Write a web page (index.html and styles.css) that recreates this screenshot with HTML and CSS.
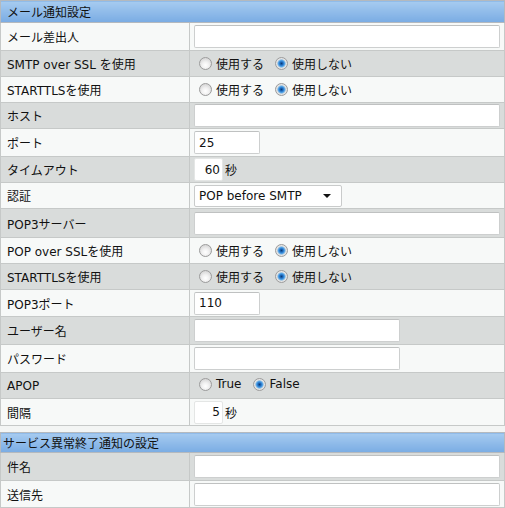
FILE: index.html
```html
<!DOCTYPE html>
<html lang="ja">
<head>
<meta charset="utf-8">
<title>メール通知設定</title>
<link rel="stylesheet" href="styles.css">
</head>
<body>
<div class="page">
  <table class="settings">
    <colgroup><col class="col-label"><col class="col-field"></colgroup>
    <tr class="head"><th colspan="2">メール通知設定</th></tr>
    <tr class="light tall"><td class="label">メール差出人</td><td class="field"><input class="text full" type="text"></td></tr>
    <tr class="gray"><td class="label">SMTP over SSL を使用</td><td class="field"><label class="opt"><input class="radio" type="radio" name="smtpssl">使用する</label><label class="opt"><input class="radio" type="radio" name="smtpssl" checked>使用しない</label></td></tr>
    <tr class="light"><td class="label">STARTTLSを使用</td><td class="field"><label class="opt"><input class="radio" type="radio" name="smtptls">使用する</label><label class="opt"><input class="radio" type="radio" name="smtptls" checked>使用しない</label></td></tr>
    <tr class="gray"><td class="label">ホスト</td><td class="field"><input class="text full" type="text"></td></tr>
    <tr class="light tall"><td class="label">ポート</td><td class="field"><input class="text port" type="text" value="25"></td></tr>
    <tr class="gray"><td class="label">タイムアウト</td><td class="field"><input class="text num" type="text" value="60"><span class="unit">秒</span></td></tr>
    <tr class="light"><td class="label">認証</td><td class="field"><span class="select-wrap"><select class="select"><option>POP before SMTP</option></select></span></td></tr>
    <tr class="gray taller"><td class="label">POP3サーバー</td><td class="field"><input class="text full" type="text"></td></tr>
    <tr class="light"><td class="label">POP over SSLを使用</td><td class="field"><label class="opt"><input class="radio" type="radio" name="popssl">使用する</label><label class="opt"><input class="radio" type="radio" name="popssl" checked>使用しない</label></td></tr>
    <tr class="gray"><td class="label">STARTTLSを使用</td><td class="field"><label class="opt"><input class="radio" type="radio" name="poptls">使用する</label><label class="opt"><input class="radio" type="radio" name="poptls" checked>使用しない</label></td></tr>
    <tr class="light mid"><td class="label">POP3ポート</td><td class="field"><input class="text port" type="text" value="110"></td></tr>
    <tr class="gray tall"><td class="label">ユーザー名</td><td class="field"><input class="text user" type="text"></td></tr>
    <tr class="light tall"><td class="label">パスワード</td><td class="field"><input class="text user" type="password"></td></tr>
    <tr class="gray"><td class="label">APOP</td><td class="field"><label class="opt"><input class="radio" type="radio" name="apop">True</label><label class="opt"><input class="radio" type="radio" name="apop" checked>False</label></td></tr>
    <tr class="light mid"><td class="label">間隔</td><td class="field"><input class="text num" type="text" value="5"><span class="unit">秒</span></td></tr>
  </table>

  <table class="settings second">
    <colgroup><col class="col-label"><col class="col-field"></colgroup>
    <tr class="head small"><th colspan="2">サービス異常終了通知の設定</th></tr>
    <tr class="gray tall"><td class="label">件名</td><td class="field"><input class="text full" type="text"></td></tr>
    <tr class="light mid"><td class="label">送信先</td><td class="field"><input class="text full" type="text"></td></tr>
  </table>
</div>
</body>
</html>
```

FILE: styles.css
```css
html, body {
  margin: 0;
  padding: 0;
  background: #f3f5f4;
}

body {
  font-family: "DejaVu Sans", "Noto Sans CJK JP", sans-serif;
  font-size: 12px;
  color: #111;
}

.page {
  width: 505px;
}

.settings {
  width: 504px;
  border-collapse: collapse;
  table-layout: fixed;
  border: 1px solid #c3c6c5;
}

.col-label { width: 189px; }
.col-field { width: 315px; }

.settings.second {
  margin-top: 6px;
}

.settings th,
.settings td {
  border: 1px solid #c6c9c8;
  padding: 0;
  vertical-align: middle;
}

.head th {
  height: 21px;
  text-align: left;
  font-weight: normal;
  padding: 0 6px;
  background: linear-gradient(#a6cbf0, #7aace3);
  border-color: #b4b9be;
}

.head.small th {
  height: 19px;
  padding: 0 2px;
}

.light td { background: #f7f9f8; }
.gray td { background: #d9dcdb; }

.settings tr td { height: 25px; }
.settings tr.mid td { height: 26px; }
.settings tr.tall td { height: 27px; }
.settings tr.taller td { height: 28px; }

.label {
  padding-left: 6px !important;
  white-space: nowrap;
  overflow: hidden;
}

.field {
  padding: 0 3px 0 4px !important;
  white-space: nowrap;
}

.text {
  box-sizing: border-box;
  height: 23px;
  margin: 0;
  border: 1px solid #cdcfcf;
  border-top-color: #bfc1c1;
  border-radius: 2px;
  background: #fff;
  font: inherit;
  color: inherit;
  padding: 0 4px;
  vertical-align: middle;
}

.text.full { width: 306px; }
.text.port { width: 66px; }
.text.user { width: 206px; }
.text.num {
  width: 29px;
  text-align: right;
  padding: 0 2px;
  border-color: #e4e6e5;
}

.unit {
  margin-left: 2px;
  vertical-align: middle;
}

.select-wrap {
  position: relative;
  display: inline-block;
  vertical-align: middle;
}

.select-wrap::after {
  content: "";
  position: absolute;
  right: 11px;
  top: 9px;
  border-left: 4px solid transparent;
  border-right: 4px solid transparent;
  border-top: 4px solid #111;
  pointer-events: none;
}

.select {
  -webkit-appearance: none;
  appearance: none;
  box-sizing: border-box;
  width: 148px;
  height: 22px;
  margin: 0;
  border: 1px solid #c9cbcb;
  border-radius: 2px;
  background: #fff;
  font: inherit;
  color: inherit;
  padding: 0 4px;
}

.opt {
  display: inline-flex;
  align-items: center;
  margin-right: 6px;
}

.radio {
  -webkit-appearance: none;
  appearance: none;
  box-sizing: border-box;
  width: 13px;
  height: 13px;
  margin: 0 4px 0 5px;
  border: 1px solid #9c9c9c;
  border-radius: 50%;
  background: radial-gradient(circle at 50% 65%, #ffffff 0, #f2f2f2 35%, #c9c9c9 100%);
}

.radio:checked {
  background: radial-gradient(circle at 50% 50%, #0b3a73 0, #1f6cc0 1.6px, #4da0e6 3px, #a8c8e0 4px, #e8e8e8 4.6px, #d0d0d0 100%);
}
```
